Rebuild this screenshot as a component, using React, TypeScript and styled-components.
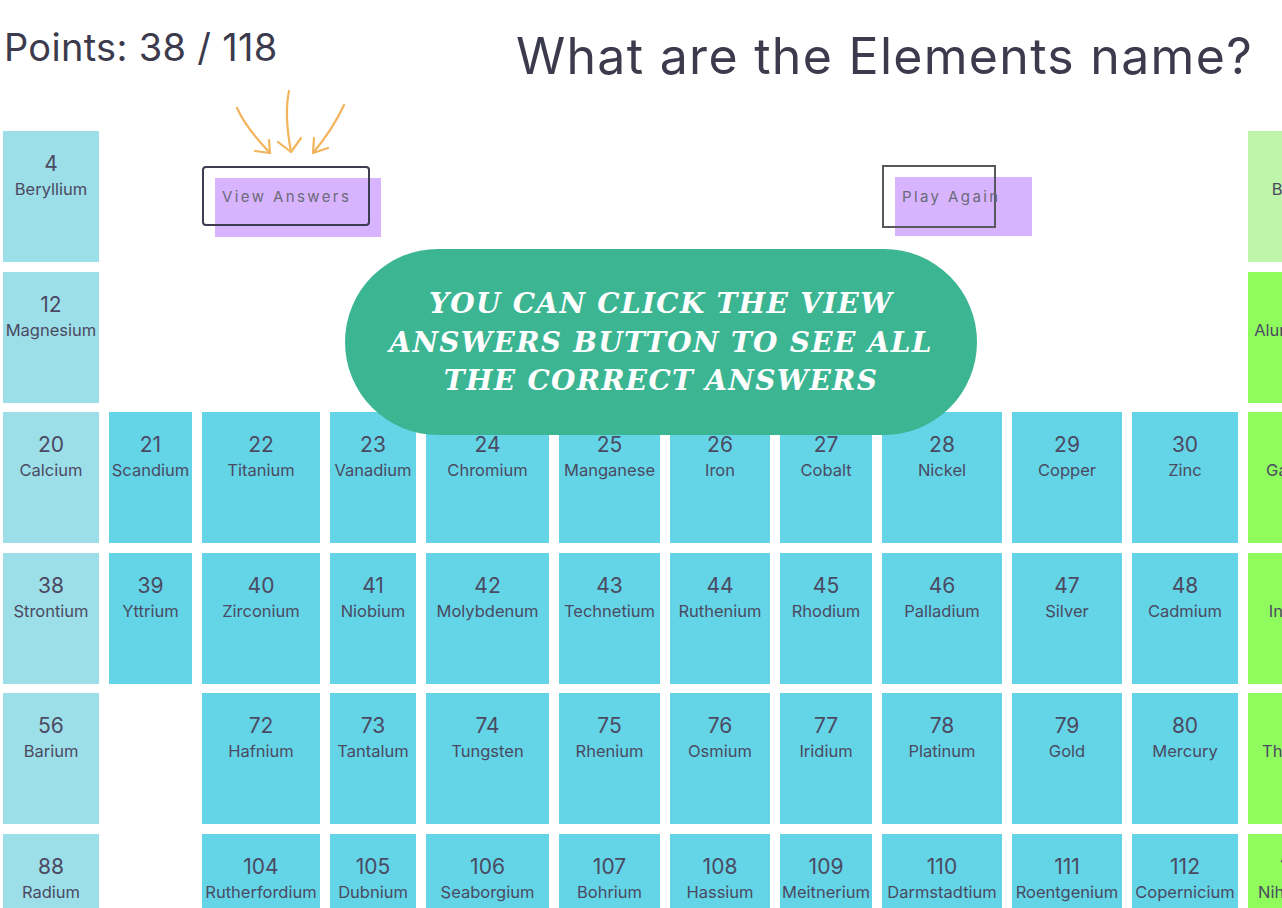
import styled, { createGlobalStyle } from 'styled-components'

const GlobalStyle = createGlobalStyle`
  html {
    background: #ffffff;
  }
  html, body {
    margin: 0;
    padding: 0;
    overflow: hidden;
  }
  body {
    font-family: Inter, "Noto Sans", sans-serif;
    color: #3b3b4d;
  }
`

type Kind = 'alkaline' | 'transition' | 'metalloid' | 'post'

const colors: Record<Kind, string> = {
  alkaline: '#9ddfe8',
  transition: '#63d5e7',
  metalloid: '#bef5aa',
  post: '#8ffb5c',
}

type Cell = [number, string, Kind] | null

const rows: Cell[][] = [
  [[4, 'Beryllium', 'alkaline'], null, null, null, null, null, null, null, null, null, null, [5, 'Boron', 'metalloid']],
  [[12, 'Magnesium', 'alkaline'], null, null, null, null, null, null, null, null, null, null, [13, 'Aluminium', 'post']],
  [
    [20, 'Calcium', 'alkaline'], [21, 'Scandium', 'transition'], [22, 'Titanium', 'transition'], [23, 'Vanadium', 'transition'],
    [24, 'Chromium', 'transition'], [25, 'Manganese', 'transition'], [26, 'Iron', 'transition'], [27, 'Cobalt', 'transition'],
    [28, 'Nickel', 'transition'], [29, 'Copper', 'transition'], [30, 'Zinc', 'transition'], [31, 'Gallium', 'post'],
  ],
  [
    [38, 'Strontium', 'alkaline'], [39, 'Yttrium', 'transition'], [40, 'Zirconium', 'transition'], [41, 'Niobium', 'transition'],
    [42, 'Molybdenum', 'transition'], [43, 'Technetium', 'transition'], [44, 'Ruthenium', 'transition'], [45, 'Rhodium', 'transition'],
    [46, 'Palladium', 'transition'], [47, 'Silver', 'transition'], [48, 'Cadmium', 'transition'], [49, 'Indium', 'post'],
  ],
  [
    [56, 'Barium', 'alkaline'], null, [72, 'Hafnium', 'transition'], [73, 'Tantalum', 'transition'],
    [74, 'Tungsten', 'transition'], [75, 'Rhenium', 'transition'], [76, 'Osmium', 'transition'], [77, 'Iridium', 'transition'],
    [78, 'Platinum', 'transition'], [79, 'Gold', 'transition'], [80, 'Mercury', 'transition'], [81, 'Thallium', 'post'],
  ],
  [
    [88, 'Radium', 'alkaline'], null, [104, 'Rutherfordium', 'transition'], [105, 'Dubnium', 'transition'],
    [106, 'Seaborgium', 'transition'], [107, 'Bohrium', 'transition'], [108, 'Hassium', 'transition'], [109, 'Meitnerium', 'transition'],
    [110, 'Darmstadtium', 'transition'], [111, 'Roentgenium', 'transition'], [112, 'Copernicium', 'transition'], [113, 'Nihonium', 'post'],
  ],
]

const Page = styled.div`
  position: relative;
  width: 1282px;
  height: 908px;
  overflow: hidden;
`

const Header = styled.header`
  display: flex;
  justify-content: space-between;
  align-items: flex-start;
  height: 131px;
  box-sizing: border-box;
  padding: 28px 29px 0 4px;
`

const Points = styled.div`
  font-size: 38px;
  letter-spacing: 0.3px;
  line-height: 1;
  color: #3b3b4d;
`

const Title = styled.h1`
  margin: 0;
  padding-top: 3px;
  font-size: 50px;
  font-weight: 400;
  letter-spacing: 1.3px;
  line-height: 1;
  color: #3b3b4d;
`

const Table = styled.div`
  display: grid;
  grid-template-columns: 96px 83px 118px 86px 123px 101px 100px 92px 120px 110px 106px 94px;
  grid-auto-rows: 131px;
  column-gap: 10px;
  row-gap: 9.5px;
  margin-left: 3px;
  width: max-content;
`

const Element = styled.div<{ $kind: Kind }>`
  background: ${(p) => colors[p.$kind]};
  display: flex;
  flex-direction: column;
  align-items: center;
  padding-top: 20px;
  box-sizing: border-box;
  color: #4b4a62;
  white-space: nowrap;
`

const Num = styled.div`
  font-size: 21px;
  line-height: 26px;
`

const Name = styled.div`
  font-size: 16.5px;
  line-height: 24px;
`

const Slot = styled.div<{ $col: number }>`
  grid-column: ${(p) => p.$col} / span 2;
  grid-row: 1;
  position: relative;
  isolation: isolate;
`

const AnswerButton = styled.button<{ $w: number; $h: number; $shadowW: number; $radius: number; $line: string; $top: number }>`
  position: relative;
  margin-top: ${(p) => p.$top}px;
  width: ${(p) => p.$w}px;
  height: ${(p) => p.$h}px;
  box-sizing: border-box;
  border: 2px solid ${(p) => p.$line};
  border-radius: ${(p) => p.$radius}px;
  background: transparent;
  padding: 0 0 0 18px;
  text-align: left;
  white-space: nowrap;
  font-family: Inter, "Noto Sans", sans-serif;
  font-size: 15px;
  letter-spacing: 2.4px;
  color: #6a6a78;
  cursor: pointer;

  &::before {
    content: '';
    position: absolute;
    z-index: -1;
    left: 11px;
    top: 10px;
    width: ${(p) => p.$shadowW}px;
    height: 59px;
    background: #d8b4fe;
  }
`

const Arrows = styled.svg`
  position: absolute;
  left: 30px;
  top: -45px;
  width: 118px;
  height: 72px;
  overflow: visible;
`

const Banner = styled.div`
  position: absolute;
  left: 345px;
  top: 249px;
  width: 632px;
  height: 186px;
  border-radius: 93px;
  background: #3cb593;
  display: flex;
  align-items: center;
  justify-content: center;
  text-align: center;
  box-sizing: border-box;
  padding-top: 2px;
  font-family: "DejaVu Serif", "Liberation Serif", serif;
  font-style: italic;
  font-weight: 700;
  font-size: 28px;
  line-height: 38.5px;
  letter-spacing: 1.3px;
  color: #ffffff;
`

const App = () => {
  return (
    <Page>
      <GlobalStyle />
      <Header>
        <Points>Points: 38 / 118</Points>
        <Title>What are the Elements name?</Title>
      </Header>
      <Table>
        {rows.map((row, r) =>
          row.map((cell, c) => {
            const key = `${r}-${c}`
            if (!cell) return r < 2 ? null : <div key={key} style={{ gridRow: r + 1, gridColumn: c + 1 }} />
            return (
              <Element key={key} $kind={cell[2]} style={{ gridRow: r + 1, gridColumn: c + 1 }}>
                <Num>{cell[0]}</Num>
                <Name>{cell[1]}</Name>
              </Element>
            )
          })
        )}
        <Slot $col={3}>
          <Arrows viewBox="0 0 118 72" fill="none" stroke="#f2b55c" strokeWidth="2.2" strokeLinecap="round" strokeLinejoin="round">
            <path d="M5 22 Q14 42 38 67" />
            <path d="M23 65 L38 67 L37 54" />
            <path d="M57 5 Q52 28 59 66" />
            <path d="M46 56 L59 66 L69 52" />
            <path d="M112 19 Q101 43 81 67" />
            <path d="M82 52 L81 67 L96 62" />
          </Arrows>
          <AnswerButton $w={168} $h={60} $shadowW={166} $radius={4} $line="#3d3d4f" $top={35}>
            View Answers
          </AnswerButton>
        </Slot>
        <Slot $col={9}>
          <AnswerButton $w={114} $h={63} $shadowW={137} $radius={0} $line="#58585f" $top={34}>
            Play Again
          </AnswerButton>
        </Slot>
      </Table>
      <Banner>
        YOU CAN CLICK THE VIEW
        <br />
        ANSWERS BUTTON TO SEE ALL
        <br />
        THE CORRECT ANSWERS
      </Banner>
    </Page>
  )
}

export default App
